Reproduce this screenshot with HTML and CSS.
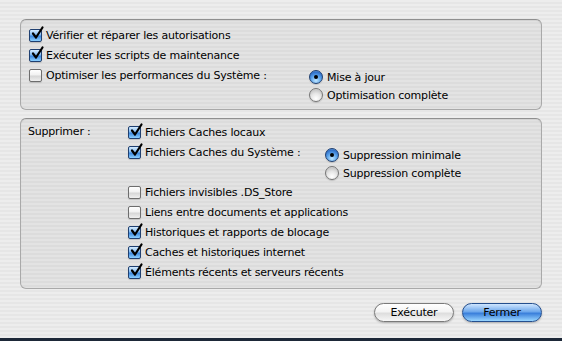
FILE: index.html
```html
<!DOCTYPE html>
<html lang="fr">
<head>
    <meta charset="UTF-8">
    <title>Maintenance</title>
    <link rel="stylesheet" href="styles.css">
</head>
<body>
    <div class="dialog">
        <div class="group group-top">
            <label class="row"><span class="cb checked"><svg viewBox="0 0 14 14"><path d="M3 6.5 L6 10.5 L12.5 0.5"/></svg></span>Vérifier et réparer les autorisations</label>
            <label class="row"><span class="cb checked"><svg viewBox="0 0 14 14"><path d="M3 6.5 L6 10.5 L12.5 0.5"/></svg></span>Exécuter les scripts de maintenance</label>
            <div class="row row-split">
                <label class="row-item optimise"><span class="cb"></span>Optimiser les performances du Système :</label>
                <div class="radios">
                    <label class="radio-row"><span class="rb on"></span>Mise à jour</label>
                    <label class="radio-row"><span class="rb"></span>Optimisation complète</label>
                </div>
            </div>
        </div>

        <div class="group group-bottom">
            <div class="side-label">Supprimer :</div>
            <div class="list">
                <label class="row"><span class="cb checked"><svg viewBox="0 0 14 14"><path d="M3 6.5 L6 10.5 L12.5 0.5"/></svg></span>Fichiers Caches locaux</label>
                <div class="row row-split">
                    <label class="row-item system"><span class="cb checked"><svg viewBox="0 0 14 14"><path d="M3 6.5 L6 10.5 L12.5 0.5"/></svg></span>Fichiers Caches du Système :</label>
                    <div class="radios radios-low">
                        <label class="radio-row"><span class="rb on"></span>Suppression minimale</label>
                        <label class="radio-row"><span class="rb"></span>Suppression complète</label>
                    </div>
                </div>
                <label class="row"><span class="cb"></span>Fichiers invisibles .DS_Store</label>
                <label class="row"><span class="cb"></span>Liens entre documents et applications</label>
                <label class="row"><span class="cb checked"><svg viewBox="0 0 14 14"><path d="M3 6.5 L6 10.5 L12.5 0.5"/></svg></span>Historiques et rapports de blocage</label>
                <label class="row"><span class="cb checked"><svg viewBox="0 0 14 14"><path d="M3 6.5 L6 10.5 L12.5 0.5"/></svg></span>Caches et historiques internet</label>
                <label class="row"><span class="cb checked"><svg viewBox="0 0 14 14"><path d="M3 6.5 L6 10.5 L12.5 0.5"/></svg></span>Éléments récents et serveurs récents</label>
            </div>
        </div>

        <div class="actions">
            <button class="btn">Exécuter</button>
            <button class="btn btn-default">Fermer</button>
        </div>
    </div>
    <div class="bottom-bar"></div>
</body>
</html>
```

FILE: styles.css
```css
* {
    margin: 0;
    padding: 0;
    box-sizing: border-box;
}
html, body {
    height: 100%;
}
body {
    font-family: 'DejaVu Sans', 'Liberation Sans', sans-serif;
    font-size: 11px;
    letter-spacing: -0.2px;
    color: #000;
    background: repeating-linear-gradient(180deg, #ededed 0, #ededed 2px, #e6e6e6 2px, #e6e6e6 4px);
    display: flex;
    flex-direction: column;
    overflow: hidden;
}
.dialog {
    flex: 1;
    padding: 19px 20px 0 20px;
}
.group {
    border: 1px solid #a9a9a9;
    border-top-color: #8f8f8f;
    border-radius: 6px;
    background: repeating-linear-gradient(180deg, #e3e3e3 0, #e3e3e3 2px, #dcdcdc 2px, #dcdcdc 4px);
    box-shadow: inset 0 1px 1px rgba(0, 0, 0, 0.08);
    width: 522px;
}
.group-top {
    height: 91px;
    padding: 5px 0 0 8px;
}
.group-bottom {
    height: 171px;
    margin-top: 8px;
    padding: 3px 0 0 7px;
    display: flex;
}
.side-label {
    width: 100px;
    height: 20px;
    line-height: 20px;
}
.row {
    display: flex;
    align-items: center;
    height: 20px;
    white-space: nowrap;
}
.row-split {
    align-items: flex-start;
    height: auto;
}
.row-item {
    display: flex;
    align-items: center;
    height: 20px;
}
.optimise {
    width: 280px;
}
.system {
    width: 197px;
}
.radios {
    margin-top: 3px;
}
.radios-low {
    margin-top: 4px;
}
.radio-row {
    display: flex;
    align-items: center;
    height: 18px;
    white-space: nowrap;
}

/* aqua checkbox */
.cb {
    position: relative;
    width: 13px;
    height: 13px;
    margin-right: 4px;
    border: 1px solid #6d6d6d;
    border-radius: 2px;
    background: linear-gradient(180deg, #ffffff 0%, #f1f1f1 45%, #d6d6d6 55%, #efefef 100%);
    box-shadow: 0 1px 1px rgba(0, 0, 0, 0.15);
    flex: none;
}
.cb.checked {
    border-color: #1f3f70;
    background: linear-gradient(180deg, #d6ecff 0%, #7fb8f0 45%, #3d86dc 55%, #8cd0ff 100%);
}
.cb svg {
    position: absolute;
    left: 0;
    top: -3px;
    width: 14px;
    height: 14px;
    overflow: visible;
}
.cb svg path {
    fill: none;
    stroke: #000;
    stroke-width: 2.2;
    stroke-linecap: round;
    stroke-linejoin: round;
}

/* aqua radio */
.rb {
    position: relative;
    width: 14px;
    height: 14px;
    margin-right: 4px;
    border: 1px solid #767676;
    border-radius: 50%;
    background: radial-gradient(circle at 50% 80%, #ffffff 0%, #e6e6e6 45%, #c9c9c9 75%, #f0f0f0 100%);
    box-shadow: 0 1px 1px rgba(0, 0, 0, 0.15);
    flex: none;
}
.rb.on {
    border-color: #1f3f70;
    background: radial-gradient(circle at 50% 80%, #bfe6ff 0%, #5aa2ea 45%, #2f6fc8 75%, #9fd2ff 100%);
}
.rb.on::after {
    content: "";
    position: absolute;
    left: 4px;
    top: 4px;
    width: 4px;
    height: 4px;
    border-radius: 50%;
    background: #000;
}

/* buttons */
.actions {
    display: flex;
    justify-content: flex-end;
    gap: 8px;
    width: 522px;
    margin-top: 14px;
}
.btn {
    width: 80px;
    height: 19px;
    font-family: 'DejaVu Sans', 'Liberation Sans', sans-serif;
    font-size: 11px;
    letter-spacing: -0.2px;
    color: #000;
    border: 1px solid #7a7a7a;
    border-radius: 10px;
    background: linear-gradient(180deg, #ffffff 0%, #f4f4f4 45%, #dedede 55%, #f7f7f7 100%);
    box-shadow: 0 1px 2px rgba(0, 0, 0, 0.25);
}
.btn-default {
    border-color: #244f8e;
    background: linear-gradient(180deg, #cfe6ff 0%, #6ea8ec 45%, #3a7fdb 55%, #9ad6ff 100%);
}
.bottom-bar {
    height: 3px;
    background: #1d2838;
    flex: none;
}
```
